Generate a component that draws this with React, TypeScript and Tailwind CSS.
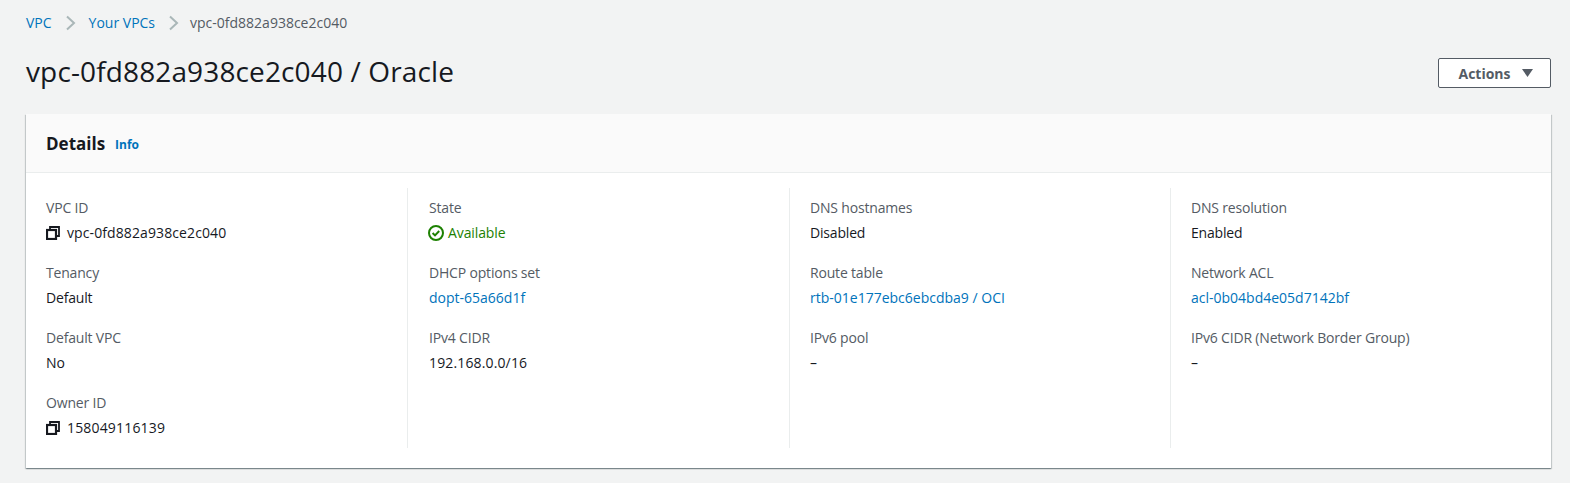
import React from 'react';

const font = { fontFamily: '"Open Sans", sans-serif' };

function CopyIcon() {
  return (
    <svg className="w-[14px] h-[14px] shrink-0" viewBox="0 0 14 14" fill="none" stroke="#16191f" strokeWidth={2}>
      <rect x="1" y="4" width="9" height="9" strokeWidth={2.2} />
      <path d="M4 3.5V1h9v9h-2.5" strokeWidth={1.8} />
    </svg>
  );
}

function StatusIcon() {
  return (
    <svg className="w-4 h-4 shrink-0 ml-[-1px]" viewBox="0 0 16 16" fill="none" stroke="#1d8102" strokeWidth={2}>
      <circle cx="8" cy="8" r="7" />
      <path d="M4.6 8l2.4 2.4 4.2-4.4" />
    </svg>
  );
}

function Field({ label, children }: { label: string; children: React.ReactNode }) {
  return (
    <div className="h-[65px]">
      <div className="h-[25px] leading-[20px] tracking-[-0.18px] text-[#545b64]">{label}</div>
      <div className="h-[25px] leading-[20px] text-[#16191f]">{children}</div>
    </div>
  );
}

function Link({ children }: { children: React.ReactNode }) {
  return <span className="text-[#0073bb]">{children}</span>;
}

function Chevron({ className }: { className: string }) {
  return (
    <svg className={`w-[12px] h-[16px] ${className}`} viewBox="0 0 12 16" fill="none" stroke="#aab7b8" strokeWidth={2}>
      <path d="M2 1.5l7 6.5-7 6.5" />
    </svg>
  );
}

export default function App() {
  return (
    <div className="min-h-[483px] bg-[#f2f3f3] px-[26px] pt-[14px] text-[14px]" style={font}>
      {/* breadcrumbs */}
      <nav className="h-[18px] flex items-center leading-[18px]">
        <Link>VPC</Link>
        <Chevron className="ml-[13px] mr-[12px]" />
        <Link>Your VPCs</Link>
        <Chevron className="ml-[13px] mr-[10px]" />
        <span className="text-[#545b64]">vpc-0fd882a938ce2c040</span>
      </nav>

      {/* title row */}
      <div className="mt-[13px] h-[52px] flex items-center justify-between">
        <h1 className="text-[28px] leading-[52px] tracking-[0.13px] text-[#16191f]">vpc-0fd882a938ce2c040 / Oracle</h1>
        <button className="w-[113px] h-[30px] pl-[2px] bg-white border border-[#545b64] rounded-[2px] flex items-center justify-center gap-[11px] font-bold text-[#545b64] mr-[-7px] mt-[4px]">
          Actions
          <svg className="w-[11px] h-[8px]" viewBox="0 0 11 8" fill="#545b64">
            <path d="M0 0h11L5.5 8z" />
          </svg>
        </button>
      </div>

      {/* details card */}
      <section className="mt-[17px] w-[1525px] h-[354px] bg-white shadow-[0_1px_1px_0_rgba(0,28,36,0.3),1px_1px_1px_0_rgba(0,28,36,0.15),-1px_1px_1px_0_rgba(0,28,36,0.15)]">
        <header className="h-[59px] pt-[1px] bg-[#fafafa] border-b border-[#eaeded] pl-[20px] flex items-center">
          <h2 className="text-[17px] font-bold text-[#16191f]">Details</h2>
          <span className="ml-[10px] mt-[2px] text-[12px] font-bold text-[#0073bb]">Info</span>
        </header>
        <div className="grid grid-cols-[382px_382px_381px_380px] pt-[15px]">
          <div className="h-[260px] pt-[10px] pl-[20px] border-r border-[#eaeded]">
            <Field label="VPC ID">
              <span className="flex items-center gap-[7px] tracking-[0.1px]"><CopyIcon />vpc-0fd882a938ce2c040</span>
            </Field>
            <Field label="Tenancy"><span className="tracking-[-0.18px]">Default</span></Field>
            <Field label="Default VPC">No</Field>
            <Field label="Owner ID">
              <span className="flex items-center gap-[7px] tracking-[0.17px]"><CopyIcon />158049116139</span>
            </Field>
          </div>
          <div className="pt-[10px] pl-[21px] border-r border-[#eaeded]">
            <Field label="State">
              <span className="flex items-center gap-[4px] tracking-[-0.1px] text-[#1d8102]"><StatusIcon />Available</span>
            </Field>
            <Field label="DHCP options set"><Link>dopt-65a66d1f</Link></Field>
            <Field label="IPv4 CIDR"><span className="tracking-[0.14px]">192.168.0.0/16</span></Field>
          </div>
          <div className="pt-[10px] pl-[20px] border-r border-[#eaeded]">
            <Field label="DNS hostnames"><span className="tracking-[-0.18px]">Disabled</span></Field>
            <Field label="Route table"><Link>rtb-01e177ebc6ebcdba9 / OCI</Link></Field>
            <Field label="IPv6 pool">–</Field>
          </div>
          <div className="pt-[10px] pl-[20px]">
            <Field label="DNS resolution"><span className="tracking-[-0.18px]">Enabled</span></Field>
            <Field label="Network ACL"><Link>acl-0b04bd4e05d7142bf</Link></Field>
            <Field label="IPv6 CIDR (Network Border Group)">–</Field>
          </div>
        </div>
      </section>
    </div>
  );
}
